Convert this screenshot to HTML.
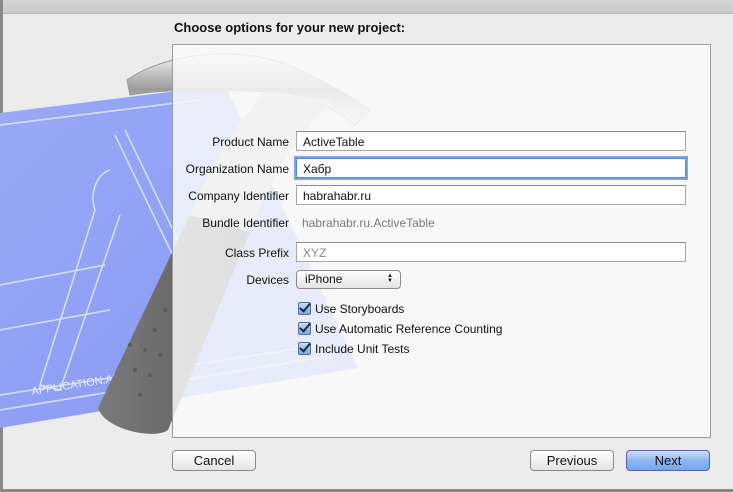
<!DOCTYPE html>
<html><head><meta charset="utf-8"><style>
*{margin:0;padding:0;box-sizing:border-box}
body{width:733px;height:492px;overflow:hidden;background:#ececec;font-family:"Liberation Sans",sans-serif;font-size:12px;color:#111;position:relative}
.abs{position:absolute}
.top{left:0;top:0;width:733px;height:14px;background:linear-gradient(#d4d4d4,#cacaca);border-bottom:1px solid #b8b8b8}
.title{left:174px;top:20px;font-weight:bold;font-size:13px;color:#111}
.panel{left:172px;top:44px;width:539px;height:394px;border:1px solid #9a9a9a;background:rgba(250,250,250,0.84)}
.lbl{width:120px;text-align:right;left:169px}
.fld{left:296px;width:390px;height:20px;background:#fff;border:1px solid #a8a8a8;border-top-color:#8e8e8e;padding:3px 6px;font-size:12px}
.btn{height:21px;border:1px solid #8b8b8b;border-radius:4px;background:linear-gradient(#fefefe,#e4e4e4);text-align:center;font-size:13px;line-height:19px}
.cb{left:298px;width:13px;height:13px;border:1px solid #55709a;border-radius:2px;background:linear-gradient(#c8dcf3,#7fa7dc)}
.cb:after{content:"";position:absolute;left:3px;top:-2px;width:4px;height:9px;border:solid #1a2a40;border-width:0 2px 2px 0;transform:rotate(40deg)}
.cl{left:315px;font-size:12px}
</style></head><body>
<div class="abs top"></div>
<div class="abs" style="left:0;top:0;width:3px;height:492px;background:#888"></div>
<svg class="abs" style="left:0;top:0" width="733" height="492">
<defs><linearGradient id="bp" x1="0" y1="0" x2="1" y2="1"><stop offset="0" stop-color="#9aaaf7"/><stop offset="1" stop-color="#8596f2"/></linearGradient>
<linearGradient id="hd" x1="0" y1="0" x2="0" y2="1"><stop offset="0" stop-color="#f4f4f4"/><stop offset=".5" stop-color="#9a9a9a"/><stop offset="1" stop-color="#e8e8e8"/></linearGradient>
<linearGradient id="hn" x1="0" y1="0" x2="1" y2="0"><stop offset="0" stop-color="#7a7a7a"/><stop offset=".5" stop-color="#6a6a6a"/><stop offset="1" stop-color="#555"/></linearGradient></defs>
<polygon points="0,113 225,85 358,368 0,428" fill="url(#bp)"/>
<g stroke="#e6ecff" stroke-width="1.5" fill="none" opacity=".85">
<line x1="0" y1="125" x2="200" y2="100"/><line x1="0" y1="410" x2="330" y2="356"/><line x1="0" y1="395" x2="320" y2="345"/>
<path d="M115,135 L175,260 M125,130 L185,255"/><path d="M110,170 C95,175 90,195 95,210 L40,385 L60,390 L120,215"/>
<path d="M0,330 L110,310 M0,285 L105,265"/>
</g>
<text x="32" y="395" fill="#e8ecff" font-size="11" transform="rotate(-9 32 395)" font-family="Liberation Sans">APPLICATION.APP</text>
<path d="M127,80 C170,50 250,45 300,70 C330,85 350,95 370,110 L355,125 C330,105 300,92 270,92 C220,90 170,88 130,95 Z" fill="url(#hd)" stroke="#999"/>
<path d="M98,408 L190,215 L250,232 L168,430 C155,440 105,430 98,408 Z" fill="url(#hn)"/>
<path d="M190,215 C210,165 240,120 265,92 L335,100 C290,140 265,190 250,232 Z" fill="#c4c4c4"/>
<g fill="#5a5a5a"><circle cx="140" cy="395" r="2"/><circle cx="150" cy="375" r="2"/><circle cx="160" cy="355" r="2"/><circle cx="135" cy="370" r="2"/><circle cx="145" cy="350" r="2"/><circle cx="155" cy="330" r="2"/><circle cx="165" cy="310" r="2"/><circle cx="130" cy="345" r="2"/></g>
</svg>
<div class="abs title">Choose options for your new project:</div>
<div class="abs panel"></div>
<div class="abs lbl" style="top:135px">Product Name</div>
<div class="abs fld" style="top:131px">ActiveTable</div>
<div class="abs lbl" style="top:162px">Organization Name</div>
<div class="abs fld" style="top:158px;box-shadow:0 0 0 2px #7aa6e0;border-color:#5c86c4">Хабр</div>
<div class="abs lbl" style="top:189px">Company Identifier</div>
<div class="abs fld" style="top:185px">habrahabr.ru</div>
<div class="abs lbl" style="top:216px">Bundle Identifier</div>
<div class="abs" style="left:302px;top:216px;color:#7a7a7a">habrahabr.ru.ActiveTable</div>
<div class="abs lbl" style="top:246px">Class Prefix</div>
<div class="abs fld" style="top:242px;color:#8a8a8a">XYZ</div>
<div class="abs lbl" style="top:273px">Devices</div>
<div class="abs btn" style="left:296px;top:270px;width:105px;height:19px;line-height:17px;text-align:left;padding-left:8px;font-size:12px">iPhone<span style="position:absolute;right:7px;top:3px;font-size:6px;line-height:5px">&#9650;<br>&#9660;</span></div>
<div class="abs cb" style="top:302px"></div><div class="abs cl" style="top:302px">Use Storyboards</div>
<div class="abs cb" style="top:322px"></div><div class="abs cl" style="top:322px">Use Automatic Reference Counting</div>
<div class="abs cb" style="top:342px"></div><div class="abs cl" style="top:342px">Include Unit Tests</div>
<div class="abs btn" style="left:172px;top:450px;width:84px">Cancel</div>
<div class="abs btn" style="left:530px;top:450px;width:84px">Previous</div>
<div class="abs btn" style="left:626px;top:450px;width:84px;border-color:#5a62a8;background:linear-gradient(#cfe0fb,#8db7f2 50%,#74a6ef)">Next</div>
<div class="abs" style="left:0;top:489px;width:733px;height:3px;background:#888"></div>
</body></html>
